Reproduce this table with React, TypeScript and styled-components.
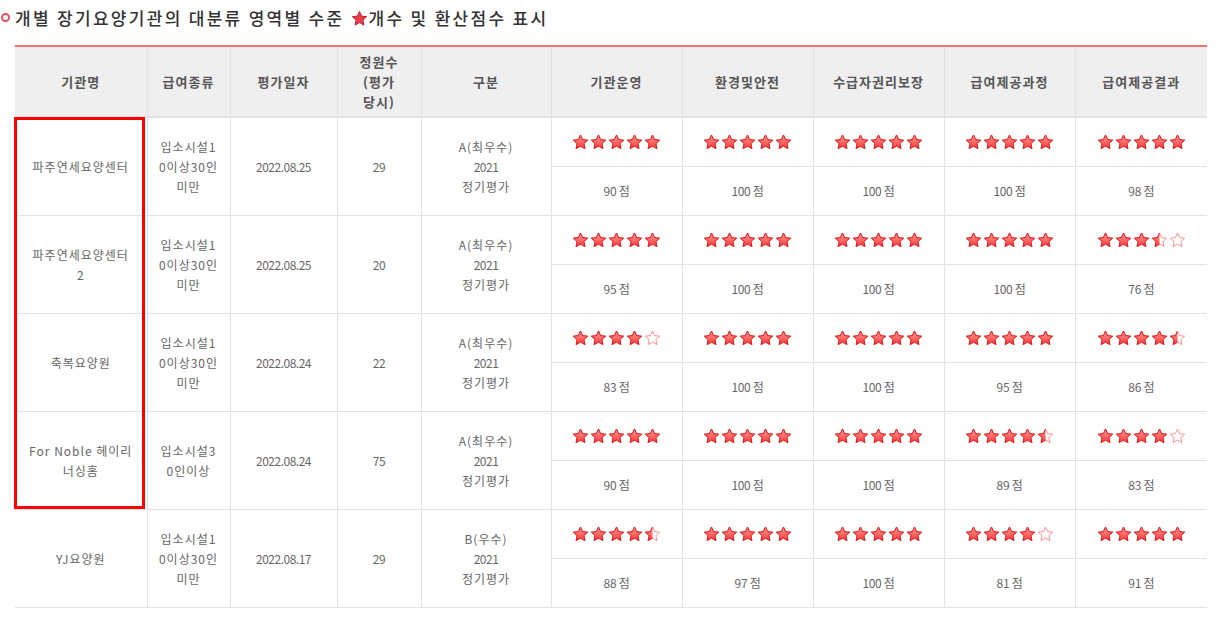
import React from "react";
import styled, { createGlobalStyle } from "styled-components";

const GlobalStyle = createGlobalStyle`
  html, body { margin: 0; padding: 0; background: #fff; }
  body { font-family: "Noto Sans CJK KR", "Noto Sans", sans-serif; color: #555; }
`;

const Page = styled.div`
  width: 1227px;
  height: 627px;
  overflow: hidden;
  position: relative;
`;

const Title = styled.h2`
  margin: 0;
  height: 34px;
  padding: 0 0 0 1px;
  display: flex;
  align-items: center;
  gap: 5px;
  font-size: 17px;
  font-weight: 500;
  letter-spacing: 2.3px;
  color: #333;
`;

const Ring = styled.span`
  width: 5px;
  height: 5px;
  border: 2.5px solid #e5505c;
  border-radius: 50%;
  flex: none;
  margin-top: 1px;
`;

const TitleStar = styled.svg`
  width: 17px;
  height: 17px;
  vertical-align: -2px;
  margin: 0 1px 0 0;
`;

const TableWrap = styled.div`
  position: relative;
  margin: 11px 0 0 15px;
  width: 1192px;
`;

const Table = styled.table`
  width: 1192px;
  border-collapse: collapse;
  table-layout: fixed;
  border-top: 2px solid #f07272;
  border-bottom: 1px solid #e2e2e2;
`;

const Th = styled.th`
  background: #efefef;
  height: 69px;
  padding: 0;
  font-size: 13px;
  font-weight: 700;
  color: #555;
  line-height: 20px;
  letter-spacing: 1px;
  border-left: 1px solid #e2e2e2;
  border-bottom: 2px solid #e2e2e2;
  &:first-child { border-left: none; }
`;

const Td = styled.td<{ $first?: boolean }>`
  padding: 0;
  text-align: center;
  font-size: 12px;
  line-height: 20px;
  color: #666;
  letter-spacing: 1px;
  border-left: ${(p) => (p.$first ? "none" : "1px solid #e2e2e2")};
  border-bottom: 1px solid #e2e2e2;
  height: 48px;
`;

const Num = styled.span`
  letter-spacing: -0.5px;
`;

const Score = styled.span`
  font-size: 12px;
  letter-spacing: -0.3px;
  color: #666;
`;

const Stars = styled.div`
  display: flex;
  justify-content: center;
  gap: 1px;
`;

const Highlight = styled.div`
  position: absolute;
  left: -1px;
  top: 72px;
  width: 125px;
  height: 386px;
  border: 3px solid #ff0000;
  pointer-events: none;
`;

const STAR_PATH =
  "M8.5 1 L10.6 5.6 L15.6 6.2 L11.9 9.6 L12.9 14.6 L8.5 12.1 L4.1 14.6 L5.1 9.6 L1.4 6.2 L6.4 5.6 Z";

let uid = 0;
const Star: React.FC<{ fill: number }> = ({ fill }) => {
  const id = React.useMemo(() => `s${uid++}`, []);
  return (
    <svg width="17" height="16" viewBox="0 0 17 16">
      <defs>
        <linearGradient id={`g${id}`} x1="0" y1="0" x2="0" y2="1">
          <stop offset="0" stopColor="#ff9a9a" />
          <stop offset="1" stopColor="#ff3b3b" />
        </linearGradient>
        <clipPath id={`c${id}`}>
          <rect x="0" y="0" width={17 * fill} height="16" />
        </clipPath>
      </defs>
      <path d={STAR_PATH} fill="#fff" stroke="#ff8f8f" strokeWidth="1" strokeLinejoin="round" />
      {fill > 0 && (
        <path
          d={STAR_PATH}
          fill={`url(#g${id})`}
          stroke="#e01818"
          strokeWidth="1"
          strokeLinejoin="round"
          clipPath={`url(#c${id})`}
        />
      )}
    </svg>
  );
};

const Rating: React.FC<{ value: number }> = ({ value }) => (
  <Stars>
    {[0, 1, 2, 3, 4].map((i) => (
      <Star key={i} fill={Math.max(0, Math.min(1, value - i))} />
    ))}
  </Stars>
);

type Row = {
  name: React.ReactNode;
  type: React.ReactNode;
  date: string;
  cap: string;
  grade: string;
  stars: number[];
  scores: number[];
};

const t1 = (
  <>
    입소시설1
    <br />
    0이상30인
    <br />
    미만
  </>
);

const rows: Row[] = [
  { name: "파주연세요양센터", type: t1, date: "2022.08.25", cap: "29", grade: "A(최우수)", stars: [5, 5, 5, 5, 5], scores: [90, 100, 100, 100, 98] },
  { name: <>파주연세요양센터<br />2</>, type: t1, date: "2022.08.25", cap: "20", grade: "A(최우수)", stars: [5, 5, 5, 5, 3.5], scores: [95, 100, 100, 100, 76] },
  { name: "축복요양원", type: t1, date: "2022.08.24", cap: "22", grade: "A(최우수)", stars: [4, 5, 5, 5, 4.5], scores: [83, 100, 100, 95, 86] },
  { name: <>For Noble 헤이리<br />너싱홈</>, type: <>입소시설3<br />0인이상</>, date: "2022.08.24", cap: "75", grade: "A(최우수)", stars: [5, 5, 5, 4.5, 4], scores: [90, 100, 100, 89, 83] },
  { name: "YJ요양원", type: t1, date: "2022.08.17", cap: "29", grade: "B(우수)", stars: [4.5, 5, 5, 4, 5], scores: [88, 97, 100, 81, 91] },
];

const widths = [132, 83, 107, 84, 130, 131, 131, 131, 131, 132];

export default function App() {
  return (
    <Page>
      <GlobalStyle />
      <Title>
        <Ring />
        <span>
          개별 장기요양기관의 대분류 영역별 수준{" "}
          <TitleStar viewBox="0 0 17 16">
            <path d={STAR_PATH} fill="#e8404e" stroke="#b8202c" strokeWidth="1" strokeLinejoin="round" />
          </TitleStar>
          개수 및 환산점수 표시
        </span>
      </Title>
      <TableWrap>
        <Table>
          <colgroup>
            {widths.map((w, i) => (
              <col key={i} style={{ width: w }} />
            ))}
          </colgroup>
          <thead>
            <tr>
              <Th>기관명</Th>
              <Th>급여종류</Th>
              <Th>평가일자</Th>
              <Th>
                정원수
                <br />
                (평가
                <br />
                당시)
              </Th>
              <Th>구분</Th>
              <Th>기관운영</Th>
              <Th>환경및안전</Th>
              <Th>수급자권리보장</Th>
              <Th>급여제공과정</Th>
              <Th>급여제공결과</Th>
            </tr>
          </thead>
          <tbody>
            {rows.map((r, ri) => (
              <React.Fragment key={ri}>
                <tr>
                  <Td $first rowSpan={2}>{r.name}</Td>
                  <Td rowSpan={2}>{r.type}</Td>
                  <Td rowSpan={2}><Num>{r.date}</Num></Td>
                  <Td rowSpan={2}><Num>{r.cap}</Num></Td>
                  <Td rowSpan={2}>
                    {r.grade}
                    <br />
                    <Num>2021</Num>
                    <br />
                    정기평가
                  </Td>
                  {r.stars.map((s, i) => (
                    <Td key={i}>
                      <Rating value={s} />
                    </Td>
                  ))}
                </tr>
                <tr>
                  {r.scores.map((s, i) => (
                    <Td key={i}>
                      <Score>{s} 점</Score>
                    </Td>
                  ))}
                </tr>
              </React.Fragment>
            ))}
          </tbody>
        </Table>
        <Highlight />
      </TableWrap>
    </Page>
  );
}
